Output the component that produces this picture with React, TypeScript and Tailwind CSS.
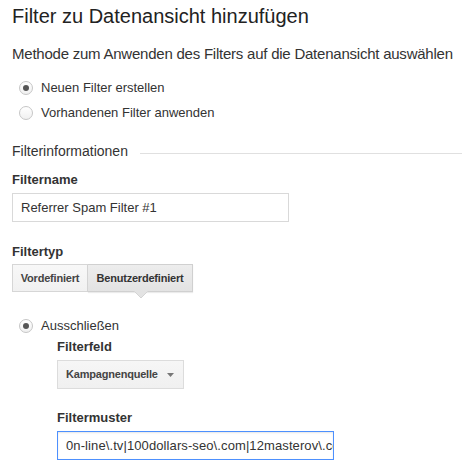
import { ChangeEvent, useState } from "react";

const Radio = ({ checked, label }: { checked?: boolean; label: string }) => (
  <label className="flex items-center h-5 pl-[7px] cursor-pointer">
    <span className="w-[14px] h-[14px] rounded-full border border-[#c6c6c6] bg-gradient-to-b from-white to-[#f0f0f0] flex items-center justify-center">
      {checked && <span className="w-[6px] h-[6px] rounded-full bg-[#555]" />}
    </span>
    <span className="ml-2 text-[13px] text-[#333]">{label}</span>
  </label>
);

const FieldLabel = ({ children }: { children: string }) => (
  <div className="text-[13px] leading-4 font-bold text-[#333]">{children}</div>
);

export default function App() {
  const [name, setName] = useState("Referrer Spam Filter #1");
  const [pattern, setPattern] = useState(
    "0n-line\\.tv|100dollars-seo\\.com|12masterov\\.com|1pamm\\.ru"
  );

  return (
    <div
      className="w-[462px] h-[467px] bg-white px-3 pt-1 overflow-hidden"
      style={{ fontFamily: '"Liberation Sans", Arial, sans-serif' }}
    >
      <h1 className="text-[20px] leading-6 text-[#222]">Filter zu Datenansicht hinzufügen</h1>

      <p className="mt-[17px] text-[15px] leading-[18px] tracking-[-0.23px] text-[#333] whitespace-nowrap">
        Methode zum Anwenden des Filters auf die Datenansicht auswählen
      </p>

      <div className="mt-[15px] flex flex-col gap-[5px]">
        <Radio checked label="Neuen Filter erstellen" />
        <Radio label="Vorhandenen Filter anwenden" />
      </div>

      <div className="mt-[19px] flex items-center">
        <span className="text-[14px] leading-[18px] text-[#333]">Filterinformationen</span>
        <span className="ml-3 mt-1 flex-1 h-px bg-[#e0e0e0] -mr-3" />
      </div>

      <div className="mt-3">
        <FieldLabel>Filtername</FieldLabel>
        <input
          value={name}
          onChange={(e: ChangeEvent<HTMLInputElement>) => setName(e.target.value)}
          className="mt-[5px] block w-[277px] h-[29px] border border-[#d9d9d9] pl-2 pr-[2px] text-[13px] text-[#333] outline-none"
        />
      </div>

      <div className="mt-[22px]">
        <FieldLabel>Filtertyp</FieldLabel>
        <div className="mt-1 flex">
          <button className="h-[28px] w-[76px] border border-[#d6d6d6] bg-gradient-to-b from-[#f8f8f8] to-[#f1f1f1] text-[11px] font-bold tracking-[-0.2px] text-[#444]">
            Vordefiniert
          </button>
          <div className="relative">
            <button className="h-[28px] w-[105px] border border-l-0 border-[#d0d0d0] bg-gradient-to-b from-[#ededed] to-[#e3e3e3] text-[11px] font-bold tracking-[-0.2px] text-[#333] shadow-[0_1px_1px_rgba(0,0,0,0.08)]">
              Benutzerdefiniert
            </button>
            <svg
              className="absolute left-1/2 -translate-x-1/2 top-[27px]"
              width="14"
              height="8"
              viewBox="0 0 14 8"
            >
              <path d="M0 0 L7 7 L14 0 Z" fill="#e3e3e3" />
              <path d="M0.5 0.5 L7 7 L13.5 0.5" fill="none" stroke="#d4d4d4" strokeWidth="1" />
            </svg>
          </div>
        </div>
      </div>

      <div className="mt-6">
        <Radio checked label="Ausschließen" />
        <div className="pl-[45px]">
          <div className="mt-[3px]">
            <FieldLabel>Filterfeld</FieldLabel>
            <button className="mt-[5px] h-[29px] w-[127px] border border-[#dcdcdc] bg-gradient-to-b from-[#f6f6f6] to-[#f0f0f0] flex items-center pl-2 pr-[9px] text-[11px] font-bold tracking-[-0.2px] text-[#444]">
              <span className="flex-1 text-left">Kampagnenquelle</span>
              <svg width="7" height="4" viewBox="0 0 7 4">
                <path d="M0 0 L7 0 L3.5 4 Z" fill="#777" />
              </svg>
            </button>
          </div>
          <div className="mt-[21px]">
            <FieldLabel>Filtermuster</FieldLabel>
            <input
              value={pattern}
              onChange={(e: ChangeEvent<HTMLInputElement>) => setPattern(e.target.value)}
              className="mt-[5px] block w-[277px] h-[29px] border border-[#4d90fe] pl-2 pr-0 text-[13px] tracking-[0.1px] text-[#333] outline-none shadow-[inset_0_1px_2px_rgba(0,0,0,0.1)]"
            />
          </div>
        </div>
      </div>
    </div>
  );
}
